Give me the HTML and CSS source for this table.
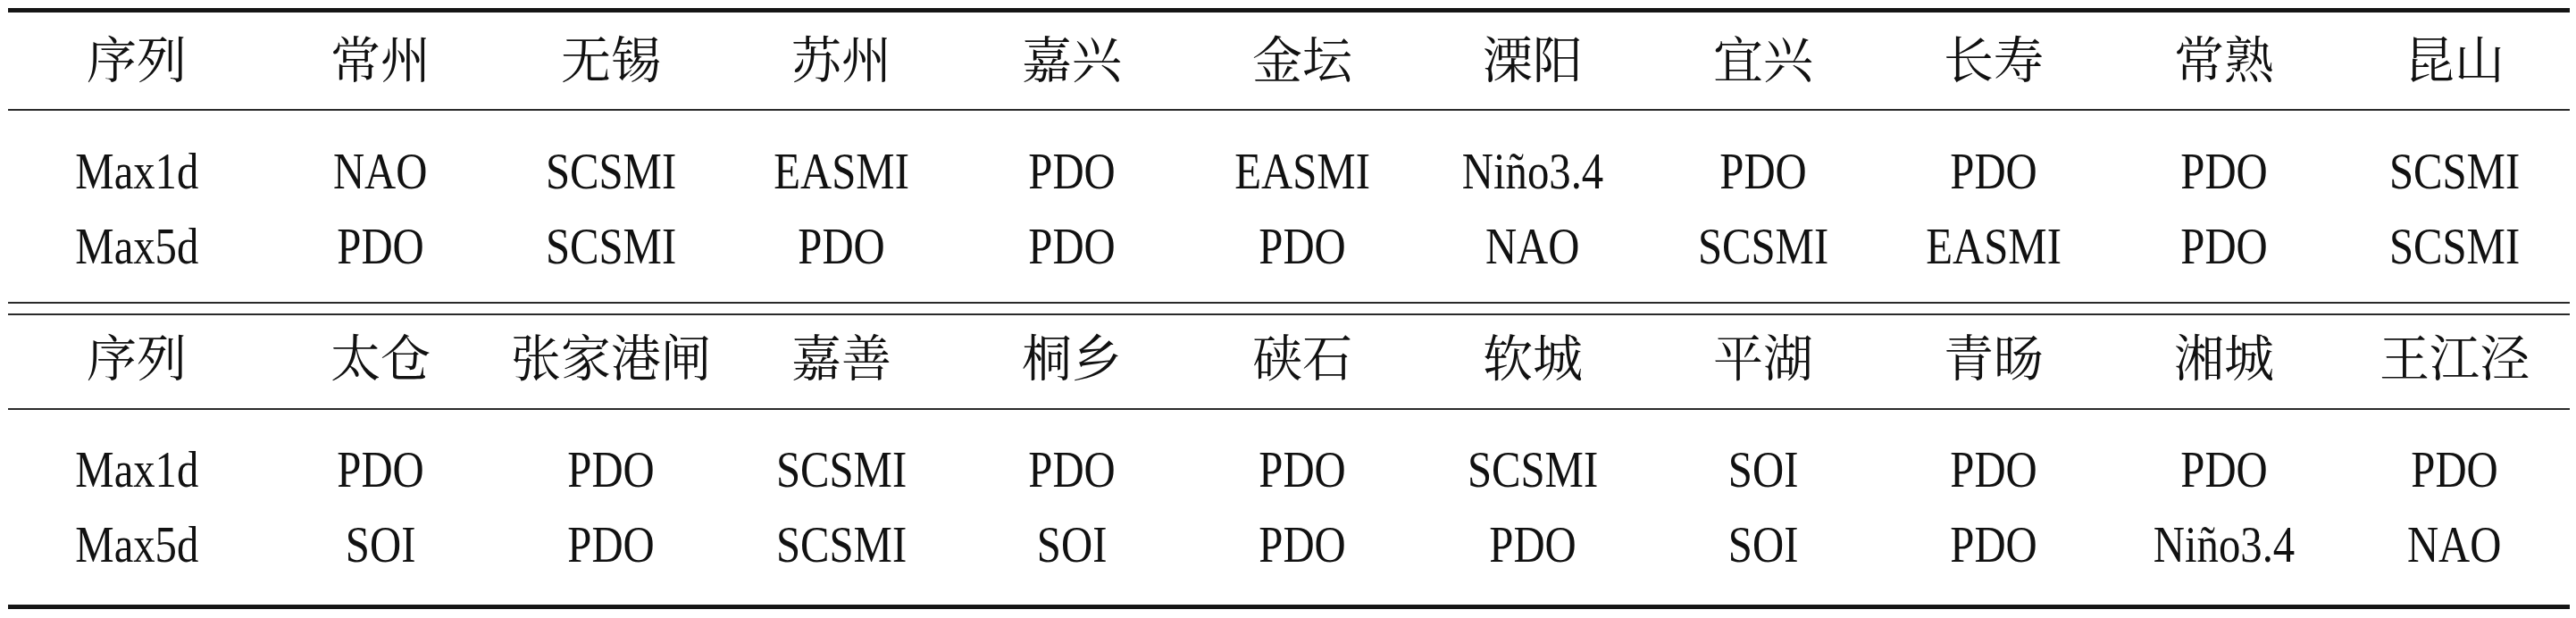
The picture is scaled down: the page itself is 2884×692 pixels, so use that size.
FILE: index.html
```html
<!DOCTYPE html>
<html lang="zh">
<head>
<meta charset="utf-8">
<title>表</title>
<link rel="stylesheet" href="styles.css">
</head>
<body>
<div class="page">
  <section class="tbl tbl-a">
    <div class="row head head-a">
      <div class="cell zh">序列</div><div class="cell zh">常州</div><div class="cell zh">无锡</div><div class="cell zh">苏州</div><div class="cell zh">嘉兴</div><div class="cell zh">金坛</div><div class="cell zh">溧阳</div><div class="cell zh">宜兴</div><div class="cell zh">长寿</div><div class="cell zh">常熟</div><div class="cell zh">昆山</div>
    </div>
    <div class="body body-a">
      <div class="row data">
        <div class="cell"><span class="en">Max1d</span></div><div class="cell"><span class="en">NAO</span></div><div class="cell"><span class="en">SCSMI</span></div><div class="cell"><span class="en">EASMI</span></div><div class="cell"><span class="en">PDO</span></div><div class="cell"><span class="en">EASMI</span></div><div class="cell"><span class="en">Niño3.4</span></div><div class="cell"><span class="en">PDO</span></div><div class="cell"><span class="en">PDO</span></div><div class="cell"><span class="en">PDO</span></div><div class="cell"><span class="en">SCSMI</span></div>
      </div>
      <div class="row data">
        <div class="cell"><span class="en">Max5d</span></div><div class="cell"><span class="en">PDO</span></div><div class="cell"><span class="en">SCSMI</span></div><div class="cell"><span class="en">PDO</span></div><div class="cell"><span class="en">PDO</span></div><div class="cell"><span class="en">PDO</span></div><div class="cell"><span class="en">NAO</span></div><div class="cell"><span class="en">SCSMI</span></div><div class="cell"><span class="en">EASMI</span></div><div class="cell"><span class="en">PDO</span></div><div class="cell"><span class="en">SCSMI</span></div>
      </div>
    </div>
  </section>
  <section class="tbl tbl-b">
    <div class="row head head-b">
      <div class="cell zh">序列</div><div class="cell zh">太仓</div><div class="cell zh">张家港闸</div><div class="cell zh">嘉善</div><div class="cell zh">桐乡</div><div class="cell zh">硖石</div><div class="cell zh">软城</div><div class="cell zh">平湖</div><div class="cell zh">青旸</div><div class="cell zh">湘城</div><div class="cell zh">王江泾</div>
    </div>
    <div class="body body-b">
      <div class="row data">
        <div class="cell"><span class="en">Max1d</span></div><div class="cell"><span class="en">PDO</span></div><div class="cell"><span class="en">PDO</span></div><div class="cell"><span class="en">SCSMI</span></div><div class="cell"><span class="en">PDO</span></div><div class="cell"><span class="en">PDO</span></div><div class="cell"><span class="en">SCSMI</span></div><div class="cell"><span class="en">SOI</span></div><div class="cell"><span class="en">PDO</span></div><div class="cell"><span class="en">PDO</span></div><div class="cell"><span class="en">PDO</span></div>
      </div>
      <div class="row data">
        <div class="cell"><span class="en">Max5d</span></div><div class="cell"><span class="en">SOI</span></div><div class="cell"><span class="en">PDO</span></div><div class="cell"><span class="en">SCSMI</span></div><div class="cell"><span class="en">SOI</span></div><div class="cell"><span class="en">PDO</span></div><div class="cell"><span class="en">PDO</span></div><div class="cell"><span class="en">SOI</span></div><div class="cell"><span class="en">PDO</span></div><div class="cell"><span class="en">Niño3.4</span></div><div class="cell"><span class="en">NAO</span></div>
      </div>
    </div>
  </section>
</div>
</body>
</html>
```
FILE: styles.css
```css
html, body {
  margin: 0;
  padding: 0;
  background: #ffffff;
}

.page {
  padding: 9px 0 0 9px;
  width: 2868px;
  color: #111111;
}

.tbl-a {
  border-top: 5px solid #151515;
  border-bottom: 2px solid #2a2a2a;
}

.tbl-b {
  margin-top: 11px;
  border-top: 2px solid #2a2a2a;
  border-bottom: 5px solid #151515;
}

.row {
  display: grid;
  grid-template-columns: 288px repeat(10, 258px);
}

.cell {
  text-align: center;
  white-space: nowrap;
}

.head {
  border-bottom: 2px solid #2a2a2a;
  line-height: 84px;
}

.head-a {
  padding: 7px 0 17px;
}

.head-b {
  padding: 2px 0 18px;
}

.zh {
  font-family: "Noto Serif CJK SC", "Noto Sans CJK SC", serif;
  font-size: 56px;
}

.body-a {
  padding: 26px 0 20px;
}

.body-b {
  padding: 25px 0 25px;
}

.data {
  height: 84px;
  line-height: 84px;
}

.en {
  display: inline-block;
  font-family: "Liberation Serif", "Times New Roman", serif;
  font-size: 56px;
  transform: scaleX(0.87);
}
```
